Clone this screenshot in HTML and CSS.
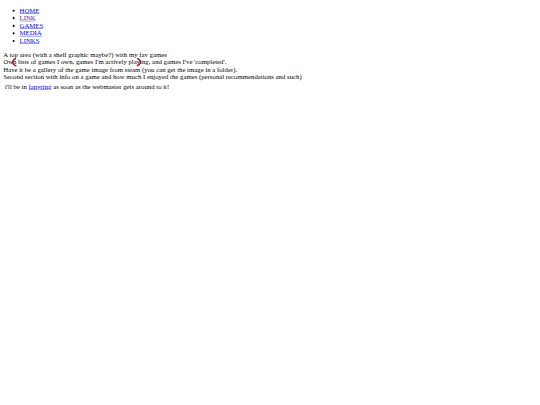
FILE: index.html
```html
<!DOCTYPE html>
<html>
<head>
<meta charset="utf-8">
<link rel="stylesheet" href="styles.css">
</head>
<body>
<ul class="nav">
<li><a href="#">HOME</a></li>
<li><a href="#" class="visited">LINK</a></li>
<li><a href="#">GAMES</a></li>
<li><a href="#">MEDIA</a></li>
<li><a href="#">LINKS</a></li>
</ul>
<div class="notes">
A top area (with a shelf graphic maybe?) with my fav games<br>
Own lists of games I own, games I'm actively playing, and games I've 'completed'.<br>
Have it be a gallery of the game image from steam (you can get the image in a folder).<br>
Second section with info on a game and how much I enjoyed the games (personal recommendations and such)
</div>
<div class="ring">&nbsp;i'll be in <a href="#">fanyring</a> as soon as the webmaster gets around to it!</div>
<svg class="mark mark-left" width="14" height="22" viewBox="0 0 14 22"><path d="M10 2 C5 4.5 3 8 3 11 C3 14.5 6.5 17.5 11 20" fill="none" stroke="#a01818" stroke-width="3.4" stroke-linecap="round"/></svg>
<svg class="mark mark-right" width="14" height="22" viewBox="0 0 14 22"><path d="M4 2 C9 4.5 11 8 11 11 C11 14.5 7.5 17.5 3 20" fill="none" stroke="#a01818" stroke-width="3.4" stroke-linecap="round"/></svg>
</body>
</html>
```
FILE: styles.css
```css
html {
  background: #ffffff;
  transform: scale(0.4076);
  transform-origin: 0 0;
  width: 1300px;
}
body {
  margin: 8px;
  font-family: "Liberation Serif", "Times New Roman", serif;
  font-size: 16.6px;
  line-height: 18.4px;
  color: #000000;
  position: relative;
}
.nav {
  margin: 10px 0 16px;
  padding-left: 40px;
}
.nav a {
  color: #0000ee;
}
.nav a.visited {
  color: #551a8b;
}
.ring {
  margin-top: 4px;
}
.ring a {
  color: #0000ee;
}
.mark {
  position: absolute;
  display: block;
}
.mark-left {
  left: 20px;
  top: 134px;
}
.mark-right {
  left: 326px;
  top: 134px;
}
```
